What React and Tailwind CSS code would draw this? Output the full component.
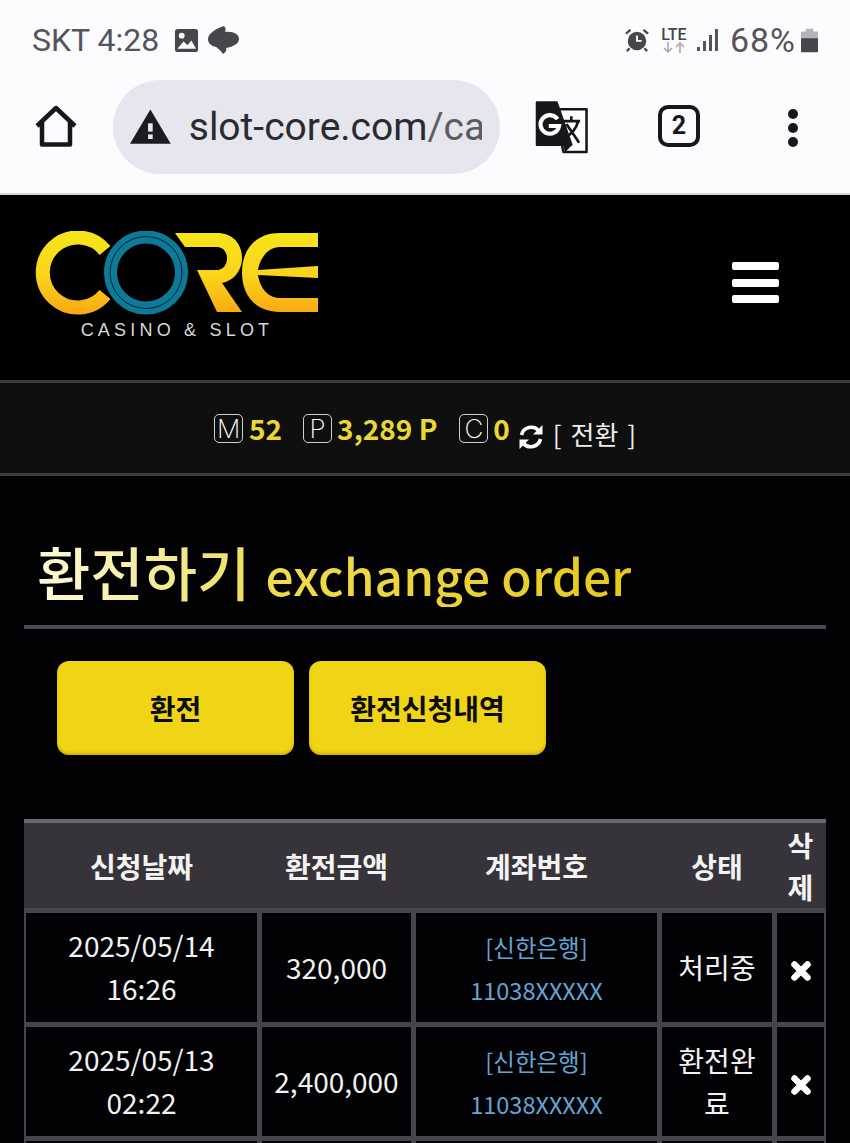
const cjk = "font-['Noto_Sans_CJK_KR','Noto_Sans',sans-serif]";

const rows = [
  { date: "2025/05/14", time: "16:26", amount: "320,000", status: "처리중" },
  { date: "2025/05/13", time: "02:22", amount: "2,400,000", status: "환전완료" },
];

const gridCols = "grid grid-cols-[231px_149px_241px_110px_47px] gap-x-[5px]";

const HomeIcon = () => (
  <svg width="44" height="44" viewBox="0 0 44 44" fill="none" stroke="#17171b" strokeWidth="4.5" strokeLinejoin="round">
    <path d="M3 21 22 3l19 18M8 17v22.500h28V17" />
  </svg>
);

const WarningIcon = () => (
  <svg width="44" height="38" viewBox="0 0 44 38" className="ml-[1px]">
    <path d="M22 0 44 37H0Z" fill="#1b1b20" />
    <rect x="19.5" y="15" width="5" height="9" fill="#e5e6ee" />
    <rect x="19.5" y="27" width="5" height="5" fill="#e5e6ee" />
  </svg>
);

const TranslateIcon = () => (
  <svg width="53" height="54" viewBox="0 0 54 54">
    <path d="M20 9h32.500v43.500H29Z" fill="#fff" stroke="#17171b" strokeWidth="2.600" strokeLinejoin="round" />
    <path d="M2 2h20l15 43H2Z" fill="#17171b" stroke="#17171b" strokeWidth="2.500" strokeLinejoin="round" />
    <path d="M29 45h9l-7.500 8Z" fill="#17171b" />
    <path d="M23 19a9.500 9.500 0 1 0 1.500 7H14" fill="none" stroke="#fff" strokeWidth="4.200" />
    <path d="M29 21h17M37 16v5M44 21c-2 8-8 14-14 17M32 24l13 19" fill="none" stroke="#17171b" strokeWidth="2.700" />
  </svg>
);

const Logo = () => (
  <svg width="284" height="84" viewBox="35 231 284 84" fill="none">
    <defs>
      <linearGradient id="gold" gradientUnits="userSpaceOnUse" x1="0" y1="231" x2="0" y2="314">
        <stop offset="0" stopColor="#f6e61b" />
        <stop offset="0.55" stopColor="#fbd31a" />
        <stop offset="1" stopColor="#f9a814" />
      </linearGradient>
    </defs>
    <path d="M105 250.500A35 35 0 1 0 105 294.500" stroke="url(#gold)" strokeWidth="14" />
    <path d="M175 233H217C233 233 242 244 242 258 242 271 233 281 222 283L242 312H217L197 270H217C223 270 227 265 227 258 227 252 223 247 217 247H185Z" fill="url(#gold)" />
    <path d="M318 233H280C255 233 242 250 242 272.500 242 295 255 312 280 312H318V298H280C268 298 260 288 258 275L318 278V266L258 270C260 258 268 247 280 247H318Z" fill="url(#gold)" />
    <circle cx="146" cy="272.500" r="35.500" stroke="#0d7a99" strokeWidth="13" />
    <circle cx="146" cy="272.500" r="36" stroke="#04242e" strokeWidth="1" />
  </svg>
);

const UnitBox = ({ letter }) => (
  <span className="flex h-[29px] w-[29px] shrink-0 items-center justify-center rounded-[5px] border border-[#cfcfcf] font-['Inter',sans-serif] text-[26px] font-extralight text-white">
    {letter}
  </span>
);

const RefreshIcon = () => (
  <svg width="26" height="26" viewBox="0 0 26 26" fill="none" stroke="#fff" strokeWidth="3.6">
    <path d="M3.500 11A10 10 0 0 1 21 7" />
    <path d="M24.500 1v9.500H15Z" fill="#fff" stroke="none" />
    <path d="M22.500 15A10 10 0 0 1 5 19" />
    <path d="M1.500 25v-9.500H11Z" fill="#fff" stroke="none" />
  </svg>
);

const TableRow = ({ row }) => (
  <div className={`${gridCols} h-[109px] text-center text-[28px] leading-[43px] text-[#f1f1f1]`}>
    <div className="flex flex-col items-center justify-center bg-[#020204] pb-[1px]">
      <span>{row.date}</span>
      <span>{row.time}</span>
    </div>
    <div className="flex items-center justify-center bg-[#020204]">{row.amount}</div>
    <div className="flex flex-col items-center justify-center bg-[#020204] pt-[2px] text-[23.5px] text-[#62a5d5]">
      <span>[신한은행]</span>
      <span>11038XXXXX</span>
    </div>
    <div className="flex items-center justify-center bg-[#020204] px-4 [word-break:break-all]">{row.status}</div>
    <div className="flex items-center justify-center bg-[#020204]">
      <svg width="20" height="20" viewBox="0 0 20 20" fill="none" stroke="#fff" strokeWidth="6.5" strokeLinecap="round" className="mt-[6px]">
        <path d="M3.500 3.500l13 13M16.500 3.500l-13 13" />
      </svg>
    </div>
  </div>
);

const EmptyRow = () => (
  <div className={`${gridCols} h-[109px]`}>
    <div className="bg-[#020204]" />
    <div className="bg-[#020204]" />
    <div className="bg-[#020204]" />
    <div className="bg-[#020204]" />
    <div className="bg-[#020204]" />
  </div>
);

export default function App() {
  return (
    <div className={`${cjk} flex h-[1143px] w-[850px] flex-col overflow-hidden bg-[#020204]`}>
      {/* phone status bar */}
      <div className="flex h-[80px] shrink-0 items-start justify-between bg-[#fcfbfe] px-[32px] pt-[21px] font-['Roboto',sans-serif] text-[32px] leading-[38px] text-[#55545a]">
        <div className="flex items-center">
          <span>SKT 4:28</span>
          <svg width="25" height="25" viewBox="0 0 26 26" className="ml-[15px]">
            <rect x="1" y="1" width="24" height="24" rx="3" fill="#47464b" />
            <circle cx="8" cy="8" r="3" fill="#fcfbfe" />
            <path d="M3.500 21.500 10 14l4 4 4-5 5 8.500Z" fill="#fcfbfe" />
          </svg>
          <svg width="32" height="28" viewBox="0 0 32 28" className="ml-[9px]">
            <path d="M16 0C18 2 18 4 17 6 25 5 31 8 31 13 31 18 24 21 18 22 19 24 18 26 15 28 12 24 10 22 8 21 3 20 0 17 0 13 0 8 7 3 16 0Z" fill="#47464b" />
          </svg>
        </div>
        <div className="flex items-center">
          <svg width="24" height="24" viewBox="0 0 26 26">
            <circle cx="13" cy="14" r="10" fill="#47464b" />
            <path d="M13 8v6h5" stroke="#fcfbfe" strokeWidth="2" fill="none" />
            <path d="M1 6l5-4M25 6l-5-4M5 22l-3 3M21 22l3 3" stroke="#47464b" strokeWidth="2.500" />
          </svg>
          <div className="ml-[12px] flex w-[26px] flex-col items-center">
            <span className="text-[16px] leading-[15px] font-medium text-[#47464b]">LTE</span>
            <svg width="24" height="11" viewBox="0 0 24 11" fill="none" stroke="#aaa9ae" strokeWidth="1.600">
              <path d="M6 0v10M2 6l4 4 4-4M18 11V1M14 5l4-4 4 4" />
            </svg>
          </div>
          <svg width="22" height="24" viewBox="0 0 22 24" fill="#55545a" className="ml-[10px]">
            <rect x="0" y="19" width="3" height="4" />
            <rect x="6" y="13" width="3" height="10" />
            <rect x="12" y="7" width="3" height="16" />
            <rect x="18" y="1" width="3" height="22" />
          </svg>
          <span className="ml-[11px] text-[34px] tracking-[1px]">68%</span>
          <svg width="17" height="25" viewBox="0 0 18 25" className="ml-[5px]">
            <path d="M5 0h8v3h4a1 1 0 0 1 1 1v8H0V4a1 1 0 0 1 1-1h4Z" fill="#b5b4b8" />
            <path d="M0 10h18v14a1 1 0 0 1-1 1H1a1 1 0 0 1-1-1Z" fill="#47464b" />
          </svg>
        </div>
      </div>

      {/* browser toolbar */}
      <div className="flex h-[113px] shrink-0 items-start bg-[#fcfbfe] pl-[34px]">
        <div className="mt-[25px]">
          <HomeIcon />
        </div>
        <div className="ml-[35px] flex h-[94px] w-[387px] items-center overflow-hidden rounded-full bg-[#e5e6ee] pr-[18px] pl-[16px]">
          <WarningIcon />
          <div className="ml-[18px] overflow-hidden font-['Roboto',sans-serif] text-[39px] whitespace-nowrap text-[#2a2a30]">
            slot-core.com<span className="text-[#5c5c63]">/cas</span>
          </div>
        </div>
        <div className="mt-[20px] ml-[35px]">
          <TranslateIcon />
        </div>
        <div className="mt-[25px] ml-[70px] flex h-[42px] w-[42px] items-center justify-center rounded-[10px] border-[4px] border-[#17171b] font-['Roboto',sans-serif] text-[25px] font-bold text-[#17171b]">
          2
        </div>
        <div className="mt-[29px] ml-[88px] flex flex-col gap-[4px]">
          <span className="h-[10px] w-[10px] rounded-full bg-[#17171b]" />
          <span className="h-[10px] w-[10px] rounded-full bg-[#17171b]" />
          <span className="h-[10px] w-[10px] rounded-full bg-[#17171b]" />
        </div>
      </div>

      {/* site header */}
      <div className="h-[187px] shrink-0 border-t-2 border-[#d5d5d8] bg-black">
        <div className="flex items-start justify-between pt-[36px] pr-[71px] pl-[35px]">
          <div className="flex flex-col items-center">
            <Logo />
            <span className="mt-[5px] font-['Liberation_Sans',sans-serif] text-[18px] leading-[20px] tracking-[4.2px] text-[#d8d8d8]">
              CASINO &amp; SLOT
            </span>
          </div>
          <div className="mt-[31px] flex w-[47px] flex-col gap-[8.5px]">
            <span className="h-[8px] rounded-[2px] bg-white" />
            <span className="h-[8px] rounded-[2px] bg-white" />
            <span className="h-[8px] rounded-[2px] bg-white" />
          </div>
        </div>
      </div>

      {/* balance bar */}
      <div className="flex h-[96px] shrink-0 items-center justify-center border-y-[3px] border-[#3d3c40] bg-[#0f0f0f] text-[28px] font-bold text-[#e8d735]">
        <UnitBox letter="M" />
        <span className="ml-[6px]">52</span>
        <span className="ml-[21px]">
          <UnitBox letter="P" />
        </span>
        <span className="ml-[5px]">3,289 P</span>
        <span className="ml-[22px]">
          <UnitBox letter="C" />
        </span>
        <span className="ml-[5px]">0</span>
        <span className="mt-[18px] ml-[8px]">
          <RefreshIcon />
        </span>
        <span className="mt-[10px] ml-[9px] text-[26px] font-normal whitespace-pre text-[#ececec] [word-spacing:3px]">[ 전환 ]</span>
      </div>

      {/* title */}
      <div className="mx-[24px] mt-[62px] flex h-[91px] shrink-0 items-baseline gap-[15px] border-b-4 border-[#4a494e] pl-[13px]">
        <h1 className="bg-linear-to-r from-[#fdf9d8] to-[#efe05a] bg-clip-text text-[58px] leading-[66px] font-medium text-transparent">
          환전하기
        </h1>
        <span className="bg-linear-to-r from-[#efdc50] to-[#e6c818] bg-clip-text text-[49.7px] leading-[66px] font-medium text-transparent">
          exchange order
        </span>
      </div>

      {/* tabs */}
      <div className="mt-[32px] flex shrink-0 gap-[15px] pl-[57px]">
        <button className="h-[94px] w-[237px] rounded-[12px] bg-[#f0d516] text-[28px] font-bold text-[#0c0c0c] shadow-[inset_0_-2px_3px_rgba(160,120,0,0.45)]">
          환전
        </button>
        <button className="h-[94px] w-[237px] rounded-[12px] bg-[#f0d516] text-[28px] font-bold text-[#0c0c0c] shadow-[inset_0_-2px_3px_rgba(160,120,0,0.45)]">
          환전신청내역
        </button>
      </div>

      {/* history table */}
      <div className="mx-[24px] mt-[64px] flex flex-col gap-y-[5px] bg-[#47454a] px-[2px]">
        <div className={`${gridCols} -mx-[2px] h-[89px] items-center border-t-4 border-[#68676c] bg-[#36343a] px-[2px] text-center text-[28px] font-bold text-[#f3f3f3]`}>
          <span>신청날짜</span>
          <span>환전금액</span>
          <span>계좌번호</span>
          <span>상태</span>
          <span className="mx-auto w-[30px] leading-[42px]">삭제</span>
        </div>
        {rows.map((row) => (
          <TableRow key={row.date} row={row} />
        ))}
        <EmptyRow />
      </div>
    </div>
  );
}
